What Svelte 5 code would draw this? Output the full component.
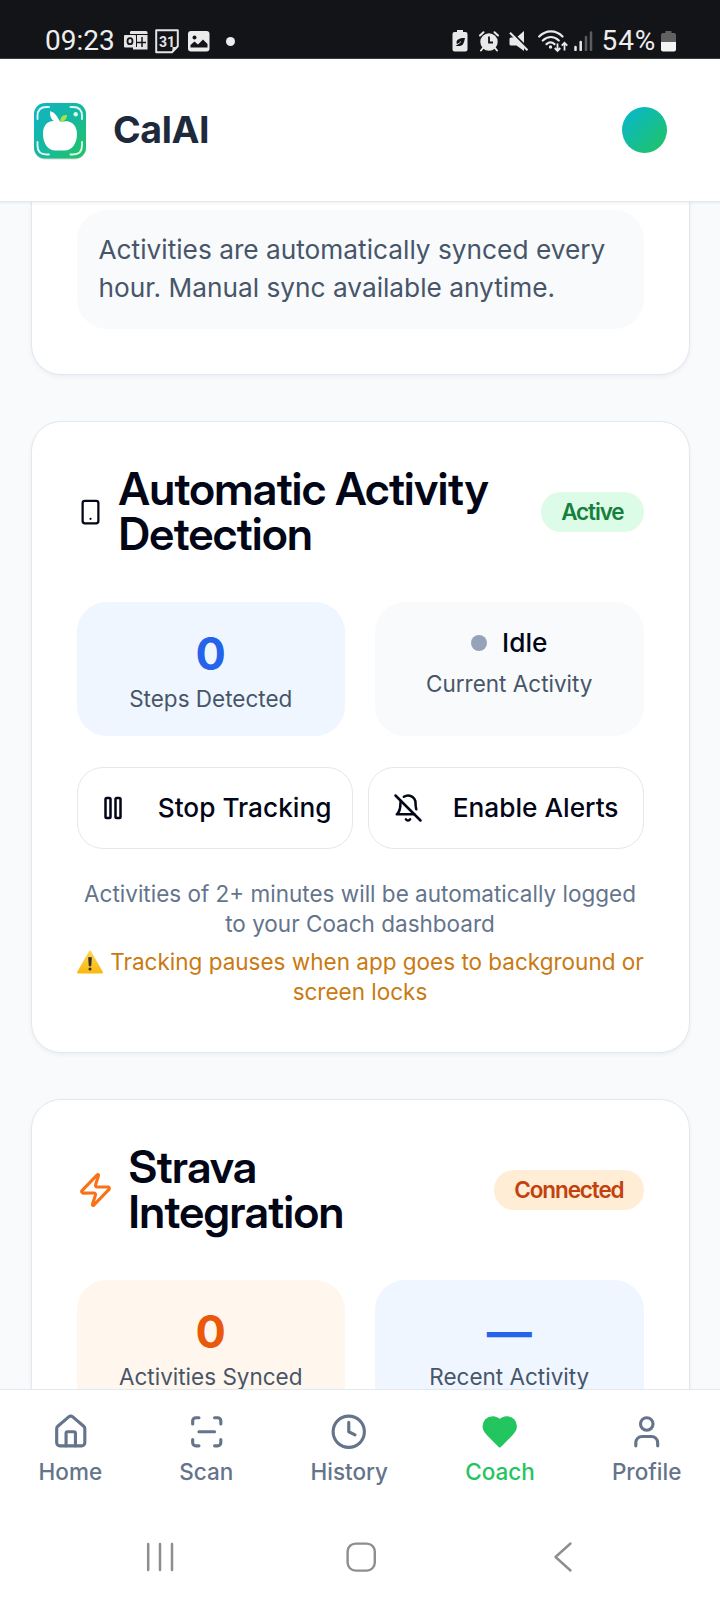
<script>
  const tabs = [
    { id: 'home', label: 'Home' },
    { id: 'scan', label: 'Scan' },
    { id: 'history', label: 'History' },
    { id: 'coach', label: 'Coach' },
    { id: 'profile', label: 'Profile' }
  ];
  const active = 'coach';
</script>

<div class="screen">
  <div class="status">
    <div class="left">
      <span class="time">09:23</span>
      <svg class="mail" width="24" height="20" viewBox="0 0 24 20">
        <path d="M7 0h15a1.500 1.500 0 0 1 1.500 1.500V3H6V1.500A1.500 1.500 0 0 1 7 0z" fill="#e4e4e5" />
        <path d="M13 4h10.500v14.500H9V16h4z" fill="#e4e4e5" />
        <path d="M18 6v10M13 11.500h9" stroke="#131418" stroke-width="1.500" />
        <rect x="0" y="4" width="12" height="12.500" rx="1" fill="#e4e4e5" />
        <ellipse cx="6" cy="10.200" rx="2.500" ry="3" fill="none" stroke="#131418" stroke-width="1.800" />
      </svg>
      <svg class="cal" width="24" height="25" viewBox="0 0 24 25">
        <path d="M1.200 1.200h21.600v16L17 23.300H1.200z" fill="none" stroke="#e4e4e5" stroke-width="2" stroke-linejoin="round" />
        <path d="M17.500 23V18H23z" fill="#e4e4e5" />
        <text x="12" y="17.500" text-anchor="middle" font-size="14" font-weight="700" fill="#e4e4e5">31</text>
      </svg>
      <svg class="pic" width="22" height="21" viewBox="0 0 22 21">
        <rect x="0" y="0" width="21.500" height="20.500" rx="3" fill="#ececed" />
        <circle cx="6.500" cy="6.500" r="2" fill="#131418" />
        <path d="M2.500 16.500V14l4-3.500 3.500 3 5-5 4.500 4.500v3.500z" fill="#131418" />
      </svg>
      <span class="more"></span>
    </div>
    <div class="right">
      <svg class="saver" width="16" height="22" viewBox="0 0 16 22">
        <path d="M5 0h6v2h2.500A2 2 0 0 1 15.500 4v15.500a2 2 0 0 1-2 2h-11a2 2 0 0 1-2-2V4a2 2 0 0 1 2-2H5z" fill="#e9e9ea" />
        <path d="M13 8c-4-.5-8.500 1-8.500 4.500 0 .8.300 1.500.8 2L3 16h4.500c4 0 4.500-4 5.500-8z" fill="#131418" />
        <path d="M3 15.500c2-1 4-1.800 6-4" stroke="#e9e9ea" stroke-width=".9" fill="none" />
      </svg>
      <svg class="alarm" width="20" height="21" viewBox="0 0 20 21">
        <circle cx="10" cy="11" r="8.700" fill="#e9e9ea" />
        <path d="M1 4.500 4.500 1.200M19 4.500l-3.500-3.300M4 17l-2 2.500M16 17l2 2.500" stroke="#e9e9ea" stroke-width="2" stroke-linecap="round" />
        <path d="M10 5.500V11.500h4" stroke="#131418" stroke-width="1.800" fill="none" />
      </svg>
      <svg class="mute" width="20" height="21" viewBox="0 0 20 21">
        <path d="M15 0v20L7.500 14.500H2a1.500 1.500 0 0 1-1.500-1.500V8A1.500 1.500 0 0 1 2 6.500h5.500z" fill="#e9e9ea" />
        <path d="M1.500 .2 20.500 19.200" stroke="#131418" stroke-width="2.400" />
        <path d="M1 1.800 18.500 19.300" stroke="#e9e9ea" stroke-width="2.200" />
      </svg>
      <svg class="wifi" width="30" height="23" viewBox="0 0 30 23">
        <g fill="none" stroke="#e9e9ea" stroke-width="2.200" stroke-linecap="round">
          <path d="M1.200 6.500C8 -.4 18 -.4 24.500 6.500" />
          <path d="M4.800 10.500c5-4.500 11.200-4.500 16 0" />
          <path d="M8.500 14.200c2.500-2.200 5.500-2.200 8 0" />
        </g>
        <circle cx="12.500" cy="17" r="1.700" fill="#e9e9ea" />
        <path d="M19.500 13.500V20.500M16.700 18l2.800 2.900L22.300 18M26.500 20.500V13M23.700 15.700l2.800-2.900 2.800 2.900" fill="none" stroke="#e9e9ea" stroke-width="1.800" />
      </svg>
      <svg class="signal" width="19" height="20" viewBox="0 0 19 20">
        <path d="M1.500 16v3M6.700 11v8" stroke="#e9e9ea" stroke-width="2.500" stroke-linecap="round" />
        <path d="M12 6v13M17 1.500v17.500" stroke="#5c5c5f" stroke-width="2.500" stroke-linecap="round" />
      </svg>
      <span class="pct">54%</span>
      <svg class="batt" width="15" height="21" viewBox="0 0 15 21">
        <path d="M4.500 0h6v2H13a2 2 0 0 1 2 2v7H0V4a2 2 0 0 1 2-2h2.500z" fill="#616163" />
        <path d="M0 11h15v7.500a2 2 0 0 1-2 2H2a2 2 0 0 1-2-2z" fill="#f4f4f5" />
      </svg>
    </div>
  </div>

  <header>
    <div class="brand">
      <svg class="logo" width="54" height="58" viewBox="0 0 54 58">
        <defs>
          <linearGradient id="logo" x1="0" y1="0" x2="1" y2="1">
            <stop offset="0" stop-color="#10b5c4" />
            <stop offset=".5" stop-color="#14b8a0" />
            <stop offset="1" stop-color="#22c55e" />
          </linearGradient>
        </defs>
        <rect x="1" y="2" width="52" height="55.500" rx="11" fill="#cfd8dc" />
        <rect x="1" y="1" width="52" height="55.500" rx="11" fill="url(#logo)" />
        <g fill="none" stroke="#dff8f4" stroke-width="1.900" stroke-linecap="round">
          <path d="M4.500 17v-3q0-9 9-9h2.500M37.500 5H40q9 0 9 9v3M4.500 40v3.500q0 9 9 9h2.500M37.500 52.500H40q9 0 9-9V40" />
        </g>
        <circle cx="42.700" cy="12.300" r="2.200" fill="#d9fbf3" />
        <path d="M27 19.500C24.500 15 22 10 17 9.200c-.5 5 2 9.500 5 10-7.500-.8-12 4.500-12 12.800 0 10 5.500 16.500 12 16.500h10c6.500 0 12-6.500 12-16.500 0-9-6-14-13-12.500z" fill="#fff" />
        <path d="M27.500 19.500c-.5-4 2-7 6.500-6.500 0 4-2.500 6.500-6.500 6.500z" fill="#a8e63a" />
      </svg>
      <span class="name">CalAI</span>
    </div>
    <div class="avatar"></div>
  </header>

  <main>
    <section class="card first">
      <p class="note">Activities are automatically synced every hour. Manual sync available anytime.</p>
    </section>

    <section class="card">
      <div class="head">
        <svg class="ico" width="27" height="38" viewBox="0 0 24 24" fill="none" stroke="currentColor" stroke-width="2" stroke-linecap="round" stroke-linejoin="round">
          <rect width="14" height="20" x="5" y="2" rx="2" ry="2" /><path d="M12 18h.01" />
        </svg>
        <h3>Automatic Activity<br />Detection</h3>
        <span class="badge green">Active</span>
      </div>
      <div class="stats">
        <div class="stat blue">
          <div class="num">0</div>
          <div class="lbl">Steps Detected</div>
        </div>
        <div class="stat slate">
          <div class="idle"><i></i><span>Idle</span></div>
          <div class="lbl">Current Activity</div>
        </div>
      </div>
      <div class="actions">
        <button class="stop">
          <svg width="30" height="30" viewBox="0 0 24 24" fill="none" stroke="currentColor" stroke-width="2" stroke-linecap="round" stroke-linejoin="round">
            <rect width="4" height="16" x="6" y="4" rx="1" /><rect width="4" height="16" x="14" y="4" rx="1" />
          </svg>
          <span>Stop Tracking</span>
        </button>
        <button class="alerts">
          <svg width="30" height="30" viewBox="0 0 24 24" fill="none" stroke="currentColor" stroke-width="2" stroke-linecap="round" stroke-linejoin="round">
            <path d="M8.700 3A6 6 0 0 1 18 8a21.300 21.300 0 0 0 .6 5" /><path d="M17 17H3s3-2 3-9a4.670 4.670 0 0 1 .3-1.700" /><path d="M10.300 21a1.940 1.940 0 0 0 3.400 0" /><path d="m2 2 20 20" />
          </svg>
          <span>Enable Alerts</span>
        </button>
      </div>
      <div class="hints">
        <p>Activities of 2+ minutes will be automatically logged<br />to your Coach dashboard</p>
        <p class="warn">
          <span class="line"><svg width="28" height="24" viewBox="0 0 28 24">
            <defs><linearGradient id="tri" x1="0" y1="0" x2="0" y2="1"><stop offset="0" stop-color="#f9d653" /><stop offset="1" stop-color="#fbb90f" /></linearGradient></defs>
            <path d="M14 1.500 26 22.500H2z" fill="url(#tri)" stroke="url(#tri)" stroke-width="2" stroke-linejoin="round" />
            <path d="M12.500 7.500h3l-.6 8.500h-1.800z" fill="#33302c" stroke="#33302c" stroke-width=".6" stroke-linejoin="round" />
            <circle cx="14" cy="19" r="1.500" fill="#33302c" />
          </svg><span>Tracking pauses when app goes to background or</span></span>
          screen locks
        </p>
      </div>
    </section>

    <section class="card">
      <div class="head">
        <svg class="ico zap" width="37" height="38" viewBox="0 0 24 24" fill="none" stroke="currentColor" stroke-width="2" stroke-linecap="round" stroke-linejoin="round">
          <path d="M4 14a1 1 0 0 1-.78-1.630l9.900-10.200a.5.5 0 0 1 .86.460l-1.920 6.020A1 1 0 0 0 13 10h7a1 1 0 0 1 .78 1.630l-9.900 10.200a.5.5 0 0 1-.86-.460l1.920-6.020A1 1 0 0 0 11 14z" />
        </svg>
        <h3>Strava<br />Integration</h3>
        <span class="badge orange">Connected</span>
      </div>
      <div class="stats">
        <div class="stat peach">
          <div class="num">0</div>
          <div class="lbl">Activities Synced</div>
        </div>
        <div class="stat blue">
          <div class="num">—</div>
          <div class="lbl">Recent Activity</div>
        </div>
      </div>
    </section>
  </main>

  <nav>
    {#each tabs as tab}
      <div class="tab" class:active={tab.id === active}>
        <svg width="37.500" height="37.500" viewBox="0 0 24 24" fill="none" stroke="currentColor" stroke-width="2" stroke-linecap="round" stroke-linejoin="round">
          {#if tab.id === 'home'}
            <path d="M15 21v-8a1 1 0 0 0-1-1h-4a1 1 0 0 0-1 1v8" /><path d="M3 10a2 2 0 0 1 .709-1.528l7-5.999a2 2 0 0 1 2.582 0l7 5.999A2 2 0 0 1 21 10v9a2 2 0 0 1-2 2H5a2 2 0 0 1-2-2z" />
          {:else if tab.id === 'scan'}
            <path d="M3 7V5a2 2 0 0 1 2-2h2M17 3h2a2 2 0 0 1 2 2v2M21 17v2a2 2 0 0 1-2 2h-2M7 21H5a2 2 0 0 1-2-2v-2M7 12h10" />
          {:else if tab.id === 'history'}
            <circle cx="12" cy="12" r="10" /><path d="M12 6v6l4 2" />
          {:else if tab.id === 'coach'}
            <path fill="currentColor" d="M19 14c1.490-1.460 3-3.210 3-5.500A5.500 5.500 0 0 0 16.500 3c-1.760 0-3 .5-4.500 2-1.500-1.500-2.740-2-4.500-2A5.500 5.500 0 0 0 2 8.500c0 2.300 1.500 4.050 3 5.500l7 7Z" />
          {:else}
            <path d="M19 21v-2a4 4 0 0 0-4-4H9a4 4 0 0 0-4 4v2" /><circle cx="12" cy="7" r="4" />
          {/if}
        </svg>
        <span>{tab.label}</span>
      </div>
    {/each}
  </nav>

  <div class="system">
    <svg width="34" height="34" viewBox="0 0 34 34"><path d="M5.200 4v26M17 4v26M29 4v26" stroke="#8e8e8e" stroke-width="2.500" stroke-linecap="round" /></svg>
    <svg width="34" height="34" viewBox="0 0 34 34"><rect x="2.600" y="3.600" width="27.200" height="27" rx="8" fill="none" stroke="#8e8e8e" stroke-width="2.400" /></svg>
    <svg width="34" height="34" viewBox="0 0 34 34"><path d="M24.500 3.500 9.500 17l15 13.500" fill="none" stroke="#8e8e8e" stroke-width="2.400" stroke-linecap="round" stroke-linejoin="round" /></svg>
  </div>
</div>

<style>
  :global(body) { margin: 0; background: #fff; }
  .screen, .screen * { box-sizing: border-box; }
  .screen {
    width: 720px; height: 1600px; overflow: hidden;
    display: flex; flex-direction: column;
    background: #f8fafc; color: #020617;
    font-family: Inter, "Liberation Sans", sans-serif;
  }
  svg { display: block; flex: none; }
  p, h3 { margin: 0; }

  .status {
    height: 59px; flex: none; background: #131418; color: #ededee;
    border-bottom: 1px solid #3c3d40;
    display: flex; justify-content: space-between; align-items: flex-end;
    padding: 0 44px 5px 45px; font-family: Roboto, sans-serif;
  }
  .left, .right { display: flex; align-items: center; height: 24px; }
  .time { font-size: 28px; line-height: 24px; }
  .mail { margin-left: 9px; }
  .cal { margin-left: 7px; }
  .pic { margin-left: 9px; }
  .more { width: 9px; height: 9px; border-radius: 50%; background: #ededee; margin-left: 16px; }
  .alarm { margin-left: 11px; }
  .mute { margin-left: 10px; }
  .wifi { margin-left: 9px; }
  .signal { margin-left: 6px; }
  .pct { font-size: 28px; line-height: 24px; letter-spacing: .8px; margin-left: 9px; }
  .batt { margin-left: 5px; }

  header {
    height: 143px; flex: none; background: #fff; position: relative; z-index: 1;
    border-bottom: 1px solid #e2e8f0; box-shadow: 0 1px 3px rgba(15, 23, 42, .07);
    display: flex; align-items: center; justify-content: space-between;
    padding: 0 53px 0 33px;
  }
  .brand { display: flex; align-items: center; gap: 26px; }
  .logo { margin-top: 2px; }
  .name { font-size: 37.500px; line-height: 52px; font-weight: 700; letter-spacing: -.4px; color: #1e293b; }
  .avatar { width: 45px; height: 46px; border-radius: 50%; background: linear-gradient(135deg, #06b6d4, #22c55e); }

  main { flex: 1; min-height: 0; overflow: hidden; padding: 0 30.500px; display: flex; flex-direction: column; gap: 46px; }
  .card {
    flex: none; background: #fff; border: 1px solid #e2e8f0; border-radius: 30px;
    padding: 45px; box-shadow: 0 2px 4px rgba(15, 23, 42, .05);
  }
  .first { margin-top: -40px; padding-top: 47px; }
  .note { background: #f8fafc; border-radius: 30px; padding: 21px 22px 23px; font-size: 26.250px; line-height: 37.500px; color: #475569; }

  .head { display: flex; align-items: center; gap: 15px; letter-spacing: -1.125px; }
  h3 {
    font-family: "Inter Display", Inter, sans-serif; font-variation-settings: "opsz" 24;
    font-size: 45px; line-height: 45px; font-weight: 600; letter-spacing: -.550px;
    flex: 1; white-space: nowrap; margin: -1px 0 1px;
  }
  .zap { color: #f97316; }
  .badge { border: 1px solid transparent; border-radius: 20px; font-size: 22.500px; line-height: 30px; padding: 4px 19px; font-weight: 600; }
  .green { background: #dcfce7; color: #15803d; }
  .orange { background: #ffedd5; color: #c2410c; }

  .stats { display: grid; grid-template-columns: 1fr 1fr; gap: 30px; margin-top: 45px; }
  .stat { border-radius: 30px; padding: 22px; text-align: center; height: 134px; }
  .num { font-size: 45px; line-height: 60px; font-weight: 700; }
  .lbl { font-size: 22.500px; line-height: 30px; color: #475569; }
  .blue { background: #eff6ff; }
  .blue .num { color: #2563eb; }
  .slate { background: #f8fafc; }
  .peach { background: #fff7ed; }
  .peach .num { color: #ea580c; }
  .idle { display: flex; justify-content: center; align-items: center; gap: 15px; height: 37px; margin-bottom: 8px; font-size: 26.250px; font-weight: 500; }
  .idle i { width: 16px; height: 16px; border-radius: 50%; background: #94a3b8; }

  .actions { display: grid; grid-template-columns: 1fr 1fr; gap: 15px; margin-top: 31px; }
  button {
    height: 82px; border: 1px solid #e2e8f0; border-radius: 26px; background: #fff; color: #020617;
    font: 500 26.250px/37px Inter, sans-serif; padding: 0 20px; display: flex; align-items: center; justify-content: space-between;
    white-space: nowrap;
  }
  button span { margin-bottom: 2px; }
  .alerts { padding: 0 24px; }

  .hints { margin-top: 30px; text-align: center; font-size: 22.500px; line-height: 30px; color: #64748b; white-space: nowrap; }
  .warn { margin-top: 7.500px; color: #ca7a10; }
  .line { display: flex; align-items: center; justify-content: center; gap: 6px; }

  nav {
    height: 129px; flex: none; background: #fff; border-top: 1px solid #e2e8f0;
    display: flex; justify-content: space-around; align-items: flex-start; padding-top: 23px;
  }
  .tab { display: flex; flex-direction: column; align-items: center; gap: 6px; color: #64748b; font-size: 22.500px; line-height: 30px; font-weight: 500; }
  .active { color: #22c55e; }

  .system { height: 82px; flex: none; background: #fff; display: flex; justify-content: space-between; padding: 22px 140px 0 143px; }
</style>
